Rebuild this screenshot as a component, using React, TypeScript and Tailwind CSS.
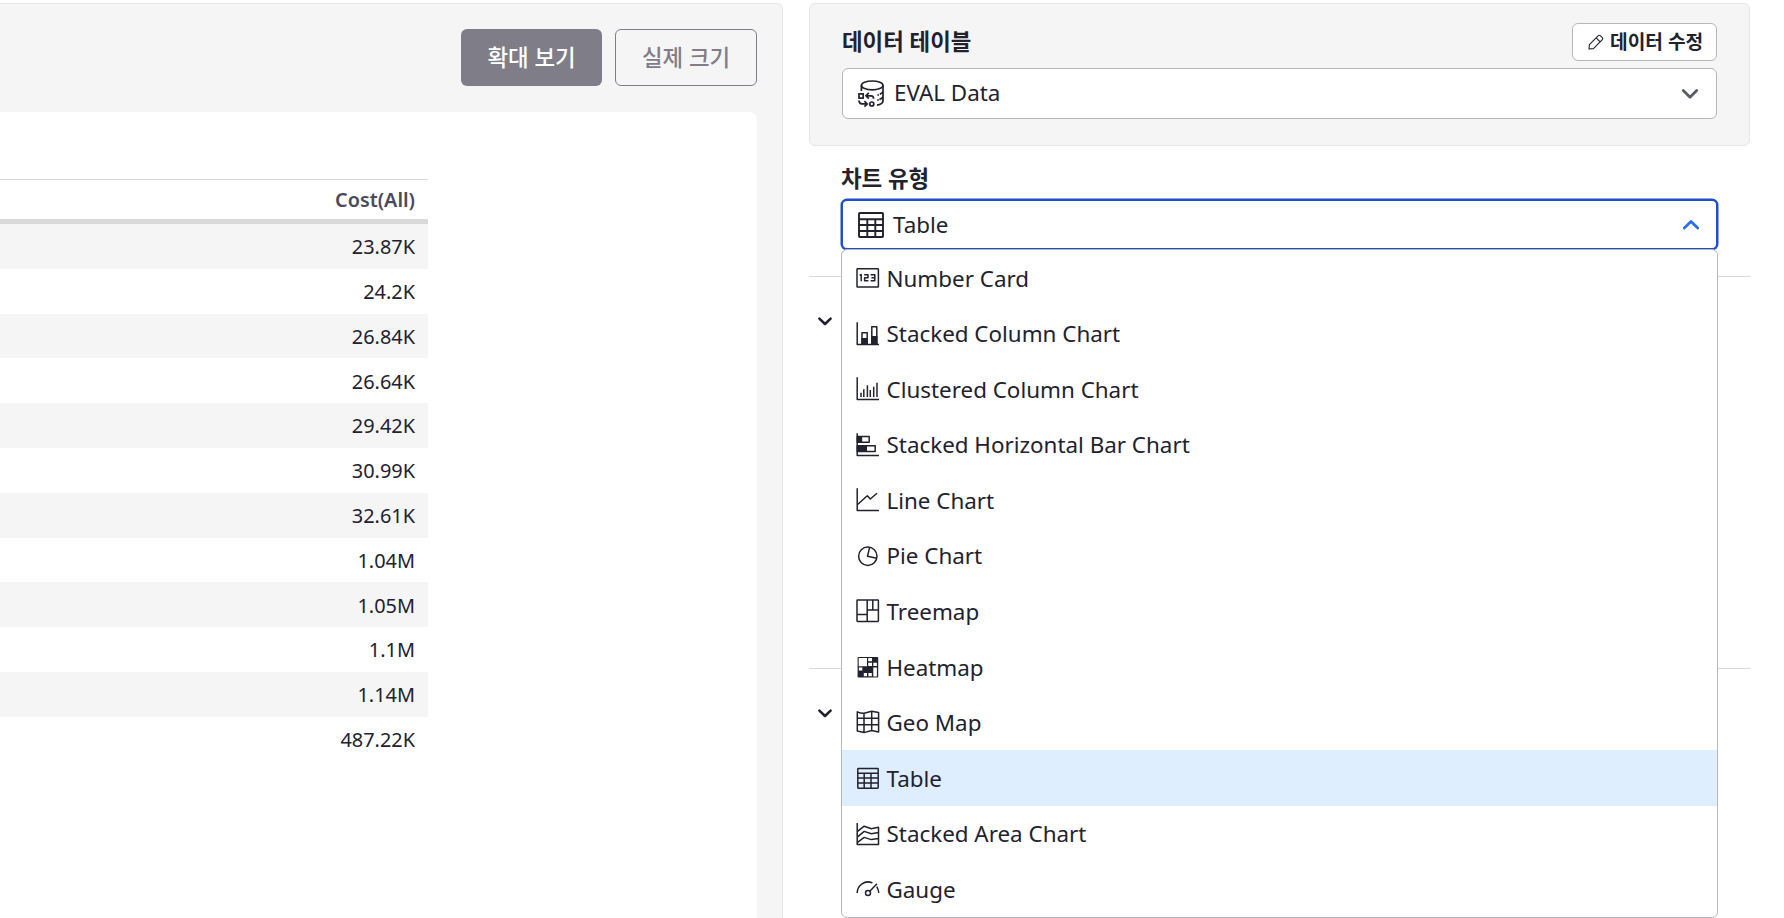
import React from "react";

type IconProps = { className?: string };

const Svg = ({ className = "size-6", children }: IconProps & { children: React.ReactNode }) => (
  <svg
    viewBox="0 0 24 24"
    className={`${className} shrink-0`}
    fill="none"
    stroke="currentColor"
    strokeWidth="1.5"
    strokeLinejoin="round"
  >
    {children}
  </svg>
);

const AXES = "M1.2 0.3V22.6H23";

const NumberCardIcon = () => (
  <Svg>
    <rect x="1" y="2.8" width="21.4" height="18.2" rx="0.6" />
    <path
      strokeWidth="1.5"
      d="M3.6 9.2L5.2 8.6V15.2M8.2 8.7H12V11.8H8.6V14.8H12.4M14.6 8.7H18.8V14.8H14.6M15.4 11.8H18.8"
    />
  </Svg>
);
const StackedColumnIcon = () => (
  <Svg>
    <path d={AXES} />
    <path d="M6 10.8H11.2V22H6ZM15.8 4.7H20.8V22H15.8Z" />
    <path fill="currentColor" stroke="none" d="M5.3 16H11.9V22.6H5.3ZM15.1 14H21.5V22.6H15.1Z" />
  </Svg>
);
const ClusteredColumnIcon = () => (
  <Svg>
    <path d={AXES} />
    <path d="M5 15.7V20M7.8 12.3V20M11.4 8.3V20M14.3 13V20M17.7 9.7V20M21 5.7V20" />
  </Svg>
);
const HorizontalBarIcon = () => (
  <Svg>
    <path d={AXES} />
    <path d="M1.3 3.5H13.2V9.2H1.3ZM1.3 12.8H19.2V18.5H1.3Z" />
    <path fill="currentColor" stroke="none" d="M1.3 2.9H6.2V9.8H1.3ZM1.3 12.2H11V19.1H1.3Z" />
  </Svg>
);
const LineIcon = () => (
  <Svg>
    <path d={AXES} />
    <path d="M1.3 16.7L11.3 7.7L14.3 11L21 5.3" />
  </Svg>
);
const PieIcon = () => (
  <Svg>
    <circle cx="11.8" cy="12.2" r="9.2" />
    <path d="M13.6 3.3L11.5 12.3L20.8 14.2" />
  </Svg>
);
const TreemapIcon = () => (
  <Svg>
    <rect x="1" y="1" width="21.4" height="21.4" rx="0.6" />
    <path d="M11.2 1V22.4M1 15.6H11.2M11.2 10.9H22.4M16.8 1V10.9" />
  </Svg>
);
const HeatmapIcon = () => (
  <Svg>
    <rect x="1.6" y="2" width="20.6" height="20.6" rx="0.8" fill="currentColor" stroke="none" />
    <path
      fill="white"
      stroke="none"
      d="M2.7 3.1H11V11.2H2.7ZM12.2 3.1H16V6.3H12.2ZM12.2 7.8H16V11H12.2ZM17.3 7.8H20.9V11H17.3ZM2.9 12.6H6.3V15.5H2.9ZM17.3 12.6H20.9V21.4H17.3ZM7.8 18.1H11V21.3H7.8ZM12.4 18.1H15.8V21.3H12.4Z"
    />
  </Svg>
);
const GeoMapIcon = () => (
  <Svg>
    <path d="M1.3 1.8Q4.5 3.4 8 3.3L15.7 1.2L22.6 2.5V22L15.7 20.5L8 22.6L1.3 21ZM8 3.3V22.6M15.7 1.2V20.5M1.3 8.3H22.6M1.3 14.7H22.6" />
  </Svg>
);
const TableIcon = ({ className }: IconProps) => (
  <Svg className={className}>
    <rect x="1.8" y="2.4" width="20.4" height="19.8" rx="0.6" />
    <path d="M1.8 7.2H22.2M1.8 12.1H22.2M1.8 16.9H22.2M8.2 7.2V22.2M15 7.2V22.2" />
  </Svg>
);
const LargeTableIcon = () => (
  <svg viewBox="0 0 26 26" className="size-[26px] shrink-0" fill="none" stroke="currentColor" strokeWidth="1.9">
    <rect x="1" y="1" width="24" height="24" rx="0.8" />
    <path d="M1 7.2H25M1 13H25M1 19H25M9.3 7.2V25M17.3 7.2V25" />
  </svg>
);
const StackedAreaIcon = () => (
  <Svg>
    <path d="M1.2 1V22.6H22.5V5.3L15.3 6.8L8.2 4.2L1.2 9.6M1.2 15.2L8.2 9.4L15.3 11.8L22.5 10.6M1.2 20.6L8.2 15.4L15.3 17.6L22.5 16.4" />
  </Svg>
);
const GaugeIcon = () => (
  <Svg>
    <circle cx="12" cy="16" r="2.5" />
    <path d="M13.8 14.2L21 6.7M1.2 16A10.8 10.8 0 0 1 16.4 5.9M20.7 9.6Q22.3 12 22.8 15.8" />
  </Svg>
);
const DatabaseIcon = () => (
  <svg
    viewBox="0 0 26 27"
    className="h-[27px] w-[26px] shrink-0"
    fill="none"
    stroke="currentColor"
    strokeWidth="1.7"
  >
    <ellipse cx="14.2" cy="5.4" rx="10.8" ry="4.4" />
    <path d="M3.4 5.4V11M25 5.4V21C25 23 22.6 24.4 19 25.2M25 11.6Q24.2 13.4 21.8 14.2M25 16.6Q24 18.6 21.4 19.4" />
    <path d="M19.4 15H21M19.2 20H20.8" />
    <rect x="1" y="13.9" width="4.2" height="4.2" />
    <circle cx="13.8" cy="24" r="2" />
    <path d="M8.2 15.8H13.2Q15.6 15.8 15.6 18.8M10.8 12.9L8 15.8L10.8 18.6M1 20.6Q1 23.9 4 23.9H9M6.4 21.2L9.2 23.9L6.4 26.6" />
  </svg>
);
const PencilIcon = () => (
  <svg
    viewBox="0 0 16 16"
    className="size-4 shrink-0"
    fill="none"
    stroke="currentColor"
    strokeWidth="1.1"
    strokeLinejoin="round"
  >
    <path d="M1 15L1.4 10.6L10.3 1.7Q11.3 .8 12.3 1.7L14.3 3.7Q15.2 4.7 14.3 5.7L5.4 14.6ZM8.2 3.8L12.2 7.8" />
  </svg>
);
const Chevron = ({ className = "", up = false }: IconProps & { up?: boolean }) => (
  <svg
    viewBox="0 0 18 12"
    className={`h-3 w-[18px] shrink-0 ${className}`}
    fill="none"
    stroke="currentColor"
    strokeWidth="2.8"
    strokeLinecap="round"
    strokeLinejoin="round"
  >
    <path d={up ? "M2.3 9L9 2.5L15.7 9" : "M2.3 2.6L9 9.2L15.7 2.6"} />
  </svg>
);
const SectionChevron = () => (
  <svg
    viewBox="0 0 18 12"
    className="h-3 w-[18px] shrink-0"
    fill="none"
    stroke="currentColor"
    strokeWidth="2.6"
    strokeLinecap="round"
    strokeLinejoin="round"
  >
    <path d="M3.4 3.6L9 9L14.6 3.6" />
  </svg>
);

const rows = [
  "23.87K", "24.2K", "26.84K", "26.64K", "29.42K", "30.99K",
  "32.61K", "1.04M", "1.05M", "1.1M", "1.14M", "487.22K",
];

const chartTypes: { label: string; Icon: React.ComponentType }[] = [
  { label: "Number Card", Icon: NumberCardIcon },
  { label: "Stacked Column Chart", Icon: StackedColumnIcon },
  { label: "Clustered Column Chart", Icon: ClusteredColumnIcon },
  { label: "Stacked Horizontal Bar Chart", Icon: HorizontalBarIcon },
  { label: "Line Chart", Icon: LineIcon },
  { label: "Pie Chart", Icon: PieIcon },
  { label: "Treemap", Icon: TreemapIcon },
  { label: "Heatmap", Icon: HeatmapIcon },
  { label: "Geo Map", Icon: GeoMapIcon },
  { label: "Table", Icon: TableIcon },
  { label: "Stacked Area Chart", Icon: StackedAreaIcon },
  { label: "Gauge", Icon: GaugeIcon },
];

function Preview() {
  return (
    <section className="flex w-[783px] shrink-0 flex-col rounded-tr-md border-t border-r border-[#e6e6e6] bg-[#f5f5f5] pt-[25px] pr-[25px]">
      <div className="flex justify-end gap-[13px]">
        <button className="h-[57px] w-[141px] rounded-md bg-[#7f7e88] text-[22.4px] font-medium text-white">
          확대 보기
        </button>
        <button className="h-[57px] w-[142px] rounded-md border border-[#7f7e88] text-[22.4px] font-medium text-[#7f7e88]">
          실제 크기
        </button>
      </div>
      <div className="mt-[26px] flex-1 rounded-tr-lg bg-white pt-[67px]">
        <div className="w-[428px] text-right text-[19.9px]">
          <div className="flex h-[45px] items-center justify-end border-t border-b-[5px] border-t-[#d9d9d9] border-b-[#d9d9d9] pr-[13px] text-[19.8px] font-semibold text-[#4a4a5a]">
            Cost(All)
          </div>
          {rows.map((value) => (
            <div
              key={value}
              className="flex h-[44.8px] items-center justify-end pr-[13px] pt-[1.5px] odd:bg-white even:bg-[#f5f5f5]"
            >
              {value}
            </div>
          ))}
        </div>
      </div>
    </section>
  );
}

function Menu() {
  return (
    <ul className="absolute top-[50px] left-0 z-10 h-[669px] w-[877px] overflow-hidden rounded-md border border-[#b7b7bb] bg-white pt-[0.2px]">
      {chartTypes.map(({ label, Icon }) => (
        <li
          key={label}
          className={`flex h-[55.57px] items-center gap-[6.5px] pl-[14px] text-[22.4px] ${
            label === "Table" ? "bg-[#deeefe]" : ""
          }`}
        >
          <Icon />
          <span className="pt-px">{label}</span>
        </li>
      ))}
    </ul>
  );
}

function Settings() {
  return (
    <aside className="flex w-[941px] shrink-0 flex-col">
      <div className="h-[143px] rounded-md border border-[#e6e6e6] bg-[#f5f5f5] px-8 pt-[19px]">
        <div className="flex items-center justify-between">
          <h2 className="text-[22.4px] leading-[38px] font-bold">데이터 테이블</h2>
          <button className="flex h-[38px] w-[145px] items-center gap-[6px] rounded-md border border-[#b7b7bb] bg-white pl-[15px] text-[19.2px] font-bold">
            <PencilIcon />
            <span className="whitespace-nowrap">데이터 수정</span>
          </button>
        </div>
        <div className="mt-[7px] flex h-[51px] items-center rounded-md border border-[#b7b7bb] bg-white pr-[17px] pl-[15px] text-[22.4px]">
          <DatabaseIcon />
          <span className="ml-[10px] flex-1 pb-[2px]">EVAL Data</span>
          <Chevron className="text-[#5a5b69]" />
        </div>
      </div>
      <div className="px-8 pt-[17px]">
        <h2 className="text-[22.4px] leading-[32px] font-bold">차트 유형</h2>
        <div className="relative mt-[4px]">
          <div className="flex h-[51px] w-[877px] items-center rounded-md border-2 border-[#2050c8] bg-white pr-[16px] pl-[15px] text-[22.4px] shadow-[0_0_0_0.5px_#2050c8]">
            <LargeTableIcon />
            <span className="ml-[9px] flex-1">Table</span>
            <Chevron up className="text-[#2a6fe4]" />
          </div>
          <Menu />
        </div>
      </div>
      <div className="mt-[26px] h-[392px] border-t border-[#d9d9d9] pt-[38px] pl-[7px]">
        <SectionChevron />
      </div>
      <div className="border-t border-[#d9d9d9] pt-[38px] pl-[7px]">
        <SectionChevron />
      </div>
    </aside>
  );
}

export default function App() {
  return (
    <main className="flex h-[918px] w-[1784px] gap-[26px] overflow-hidden bg-white pt-[3px] font-['Noto_Sans','Noto_Sans_CJK_KR',sans-serif] leading-normal text-[#22222e]">
      <Preview />
      <Settings />
    </main>
  );
}
